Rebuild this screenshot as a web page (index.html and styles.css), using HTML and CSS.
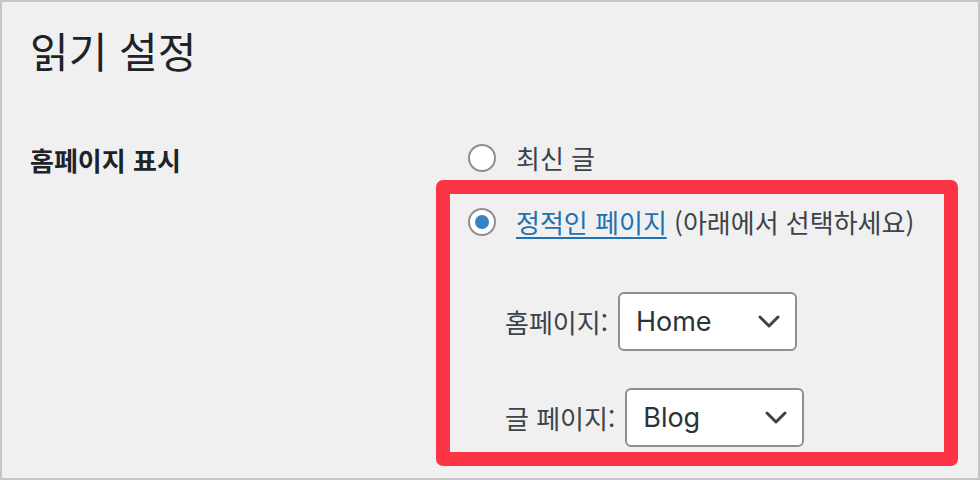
FILE: index.html
```html
<!DOCTYPE html>
<html lang="ko">
<head>
<meta charset="utf-8">
<title>읽기 설정</title>
<link rel="stylesheet" href="styles.css">
</head>
<body>
<div class="wrap">
  <h1 class="title">읽기 설정</h1>
  <div class="form-row">
    <div class="th">홈페이지 표시</div>
    <div class="td">
      <label class="radio-row"><span class="radio"></span><span>최신 글</span></label>
      <div class="highlight">
        <label class="radio-row"><span class="radio checked"></span><span><a class="link" href="#">정적인 페이지</a> (아래에서 선택하세요)</span></label>
        <div class="select-row first">
          <span class="sel-label">홈페이지:</span>
          <div class="select"><span class="sel-text">Home</span><svg class="chev" width="22" height="13" viewBox="0 0 22 13"><path d="M2 2 L11 11 L20 2" fill="none" stroke="#3c434a" stroke-width="3" stroke-linecap="round" stroke-linejoin="round"/></svg></div>
        </div>
        <div class="select-row">
          <span class="sel-label">글 페이지:</span>
          <div class="select"><span class="sel-text">Blog</span><svg class="chev" width="22" height="13" viewBox="0 0 22 13"><path d="M2 2 L11 11 L20 2" fill="none" stroke="#3c434a" stroke-width="3" stroke-linecap="round" stroke-linejoin="round"/></svg></div>
        </div>
      </div>
    </div>
  </div>
</div>
</body>
</html>
```
FILE: styles.css
```css
html, body {
  margin: 0;
  padding: 0;
}
body {
  font-family: "Noto Sans CJK KR", "Noto Sans", sans-serif;
  color: #3c434a;
}
.wrap {
  width: 980px;
  height: 480px;
  box-sizing: border-box;
  border: 2px solid #c5c5c7;
  background: #f0f0f1;
  padding: 0 0 0 28px;
  overflow: hidden;
}
.title {
  margin: 22px 0 0;
  font-size: 42px;
  line-height: 52px;
  font-weight: 400;
  color: #1d2327;
}
.form-row {
  display: flex;
  margin-top: 64px;
}
.th {
  width: 406px;
  flex: none;
  font-size: 26px;
  line-height: 36px;
  padding-top: 2px;
  font-weight: 700;
  color: #1d2327;
}
.td {
  width: 522px;
  flex: none;
}
.radio-row {
  display: flex;
  align-items: center;
  gap: 20px;
  height: 36px;
  font-size: 26px;
  line-height: 36px;
  color: #3c434a;
}
.td > .radio-row {
  padding-left: 32px;
}
.radio {
  width: 28px;
  height: 28px;
  box-sizing: border-box;
  border: 2px solid #8c8f94;
  border-radius: 50%;
  background: #fff;
  display: flex;
  align-items: center;
  justify-content: center;
  flex: none;
}
.radio.checked::after {
  content: "";
  width: 14px;
  height: 14px;
  border-radius: 50%;
  background: #3582c4;
}
.link {
  color: #2271b1;
  text-decoration: underline;
  text-underline-offset: 4px;
  text-decoration-thickness: 2px;
}
.highlight {
  margin-top: 4px;
  width: 522px;
  box-sizing: border-box;
  border: 14px solid #fc3446;
  border-radius: 7px;
  padding: 10px 0 5px 18px;
}
.select-row {
  display: flex;
  align-items: center;
  gap: 10px;
  margin: 37px 0 0 37px;
}
.select-row.first {
  margin-top: 52px;
}
.sel-label {
  font-size: 26px;
  line-height: 36px;
  color: #3c434a;
}
.select {
  width: 179px;
  height: 59px;
  box-sizing: border-box;
  border: 2px solid #8c8f94;
  border-radius: 6px;
  background: #fff;
  display: flex;
  align-items: center;
  justify-content: space-between;
  padding: 0 15px 0 16px;
}
.sel-text {
  font-family: Inter, "Liberation Sans", sans-serif;
  font-size: 27px;
  color: #2c3338;
}
.chev {
  display: block;
}
```
